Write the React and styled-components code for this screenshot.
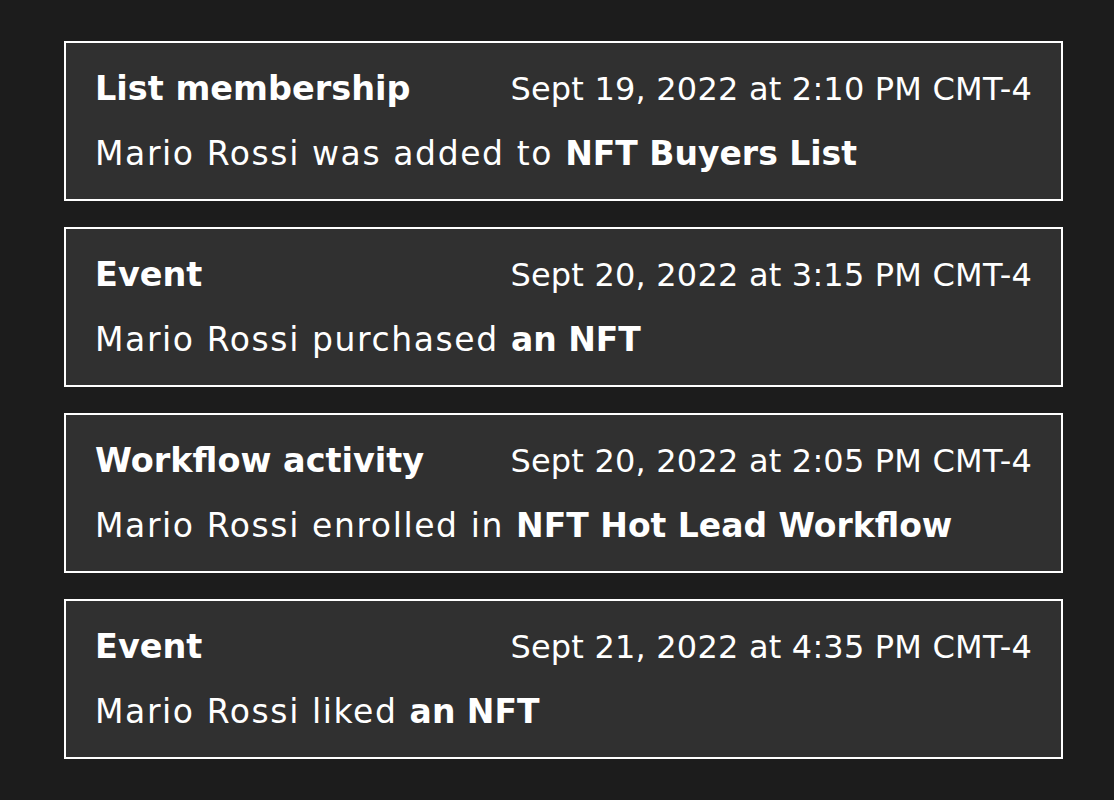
import React from "react";
import styled, { createGlobalStyle } from "styled-components";

const GlobalStyle = createGlobalStyle`
  html, body {
    margin: 0;
    padding: 0;
    background: #1c1c1c;
  }
  body {
    font-family: "DejaVu Sans", Inter, sans-serif;
    color: #ffffff;
  }
`;

const Page = styled.div`
  min-height: 800px;
  padding: 41px 0 0 64px;
  box-sizing: border-box;
`;

const Feed = styled.div`
  display: flex;
  flex-direction: column;
  gap: 26px;
  width: 999px;
`;

const Card = styled.div`
  background: #303030;
  border: 2px solid #ffffff;
  padding: 26px 29px 25px 29px;
  height: 160px;
  box-sizing: border-box;
`;

const Header = styled.div`
  display: flex;
  justify-content: space-between;
  align-items: baseline;
  height: 40px;
  line-height: 40px;
`;

const Title = styled.div`
  font-size: 33.5px;
  font-weight: 700;
`;

const Stamp = styled.div`
  font-size: 32px;
  font-weight: 400;
  letter-spacing: 0.2px;
`;

const Body = styled.div`
  margin-top: 25px;
  font-size: 33px;
  line-height: 40px;
  letter-spacing: 1.6px;
  white-space: nowrap;

  b {
    font-weight: 700;
    letter-spacing: 0;
  }
`;

const items = [
  {
    title: "List membership",
    time: "Sept 19, 2022 at 2:10 PM CMT-4",
    text: "Mario Rossi was added to",
    strong: "NFT Buyers List",
  },
  {
    title: "Event",
    time: "Sept 20, 2022 at 3:15 PM CMT-4",
    text: "Mario Rossi purchased",
    strong: "an NFT",
  },
  {
    title: "Workflow activity",
    time: "Sept 20, 2022 at 2:05 PM CMT-4",
    text: "Mario Rossi enrolled in",
    strong: "NFT Hot Lead Workflow",
  },
  {
    title: "Event",
    time: "Sept 21, 2022 at 4:35 PM CMT-4",
    text: "Mario Rossi liked",
    strong: "an NFT",
  },
];

const App = () => {
  return (
    <Page>
      <GlobalStyle />
      <Feed>
        {items.map((item, i) => (
          <Card key={i}>
            <Header>
              <Title>{item.title}</Title>
              <Stamp>{item.time}</Stamp>
            </Header>
            <Body>
              {item.text} <b>{item.strong}</b>
            </Body>
          </Card>
        ))}
      </Feed>
    </Page>
  );
};

export default App;
